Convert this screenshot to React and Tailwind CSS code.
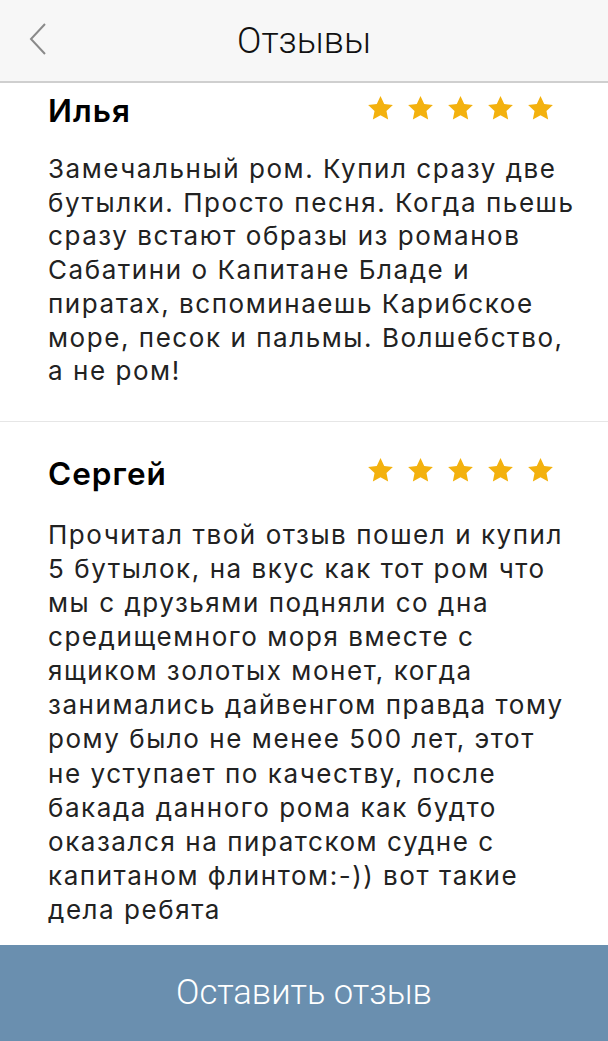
import React from "react";

const Star = () => (
  <svg width="27" height="26" viewBox="0 0 24 23" className="block">
    <path d="M12 0.8l3.3 7.1 7.7 0.9-5.7 5.3 1.5 7.6L12 17.9l-6.8 3.8 1.5-7.6L1 8.8l7.7-0.9z" fill="#f3b10e" />
  </svg>
);

const Stars = () => (
  <div className="flex gap-[13px] mb-[7px]">
    {[0, 1, 2, 3, 4].map((i) => (
      <Star key={i} />
    ))}
  </div>
);

const reviews = [
  {
    name: "Илья",
    lines: [
      "Замечальный ром. Купил сразу две",
      "бутылки. Просто песня. Когда пьешь",
      "сразу встают образы из романов",
      "Сабатини о Капитане Бладе и",
      "пиратах, вспоминаешь Карибское",
      "море, песок и пальмы. Волшебство,",
      "а не ром!",
    ],
  },
  {
    name: "Сергей",
    lines: [
      "Прочитал твой отзыв пошел и купил",
      "5 бутылок, на вкус как тот ром что",
      "мы с друзьями подняли со дна",
      "средищемного моря вместе с",
      "ящиком золотых монет, когда",
      "занимались дайвенгом правда тому",
      "рому было не менее 500 лет, этот",
      "не уступает по качеству, после",
      "бакада данного рома как будто",
      "оказался на пиратском судне с",
      "капитаном флинтом:-)) вот такие",
      "дела ребята",
    ],
  },
];

export default function App() {
  return (
    <div className="w-[608px] h-[1041px] bg-white flex flex-col overflow-hidden" style={{ fontFamily: "Inter, 'Noto Sans', sans-serif" }}>
      <div className="h-[83px] shrink-0 bg-[#f7f7f7] border-b-2 border-[#cfcfcf] relative flex items-center justify-center">
        <svg className="absolute left-[28px] top-[22px]" width="20" height="34" viewBox="0 0 20 34">
          <path d="M17 2L3 17l14 15" fill="none" stroke="#8a8a8a" strokeWidth="2" />
        </svg>
        <span className="text-[36px] text-[#111] font-light" style={{ fontFamily: "Roboto, sans-serif" }}>
          Отзывы
        </span>
      </div>
      <div className="flex-1 overflow-hidden">
        {reviews.map((r, idx) => (
          <div key={idx} className={idx === 0 ? "pl-[48px] pt-[6px] pb-[33px] border-b border-[#e6e6e6]" : "pl-[48px] pt-[30px]"}>
            <div className="flex items-center justify-between pr-[54px] h-[44px]">
              <span className="text-[31.5px] font-semibold text-black tracking-[1px]">
                {r.name}
              </span>
              <Stars />
            </div>
            <div className={(idx === 0 ? "mt-[19px] leading-[33.7px]" : "mt-[22px] leading-[34.1px]") + " text-[26px] text-[#222] tracking-[1.55px]"}>
              {r.lines.map((l, i) => (
                <div key={i} className="whitespace-nowrap">{l}</div>
              ))}
            </div>
          </div>
        ))}
      </div>
      <div className="h-[96px] shrink-0 bg-[#6a8faf] flex items-center justify-center">
        <span className="text-[34.5px] font-light text-white" style={{ fontFamily: "Roboto, sans-serif" }}>
          Оставить отзыв
        </span>
      </div>
    </div>
  );
}
